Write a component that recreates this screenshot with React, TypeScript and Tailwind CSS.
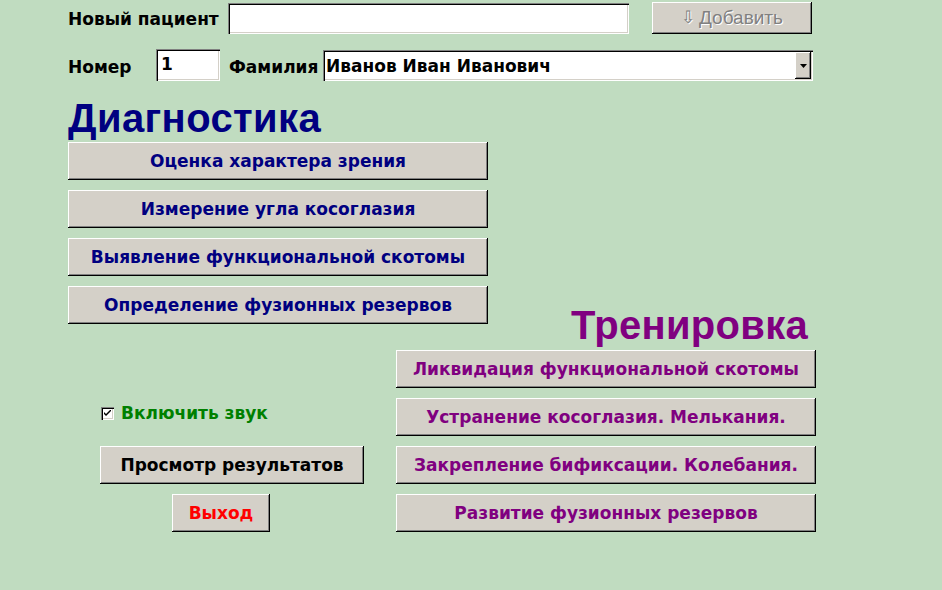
const raised =
  "bg-[#d4d0c8] shadow-[inset_-1px_-1px_0_#000,inset_1px_1px_0_#fff,inset_-2px_-2px_0_#808080]";
const sunken =
  "bg-white shadow-[inset_1px_1px_0_#808080,inset_2px_2px_0_#000,inset_-1px_-1px_0_#fff,inset_-2px_-2px_0_#d4d0c8]";
const uiFont = "font-['DejaVu_Sans',sans-serif] text-[17px] font-bold";

const diagItems = [
  "Оценка характера зрения",
  "Измерение угла косоглазия",
  "Выявление функциональной скотомы",
  "Определение фузионных резервов",
];

const trainItems = [
  "Ликвидация функциональной скотомы",
  "Устранение косоглазия. Мелькания.",
  "Закрепление бификсации. Колебания.",
  "Развитие фузионных резервов",
];

function WinButton({
  label,
  className,
  textClass,
}: {
  label: string;
  className: string;
  textClass: string;
}) {
  return (
    <button
      className={`${raised} ${className} ${uiFont} h-[38px] pt-[2px] flex items-center justify-center ${textClass}`}
    >
      {label}
    </button>
  );
}

export default function App() {
  return (
    <div
      className="w-[942px] h-[590px] bg-[#c0dcc0] pl-[68px] pt-[2px] overflow-hidden text-black"
      style={{ fontFamily: '"Liberation Sans", Arial, sans-serif' }}
    >
      {/* new patient row */}
      <div className="flex items-center h-[32px]">
        <span className={`w-[160px] pt-[3px] ${uiFont}`}>Новый пациент</span>
        <div className={`${sunken} w-[401px] h-[31px] mt-[1px]`} />
        <button
          className={`${raised} ml-[23px] w-[160px] h-[32px] flex items-center justify-center gap-[4px] text-[19px] text-[#808080] [text-shadow:1px_1px_0_#fff]`}
        >
          <span className="text-[17px]">⇩</span>
          <span>Добавить</span>
        </button>
      </div>

      {/* number / surname row */}
      <div className="flex items-center h-[32px] mt-[15px]">
        <span className={`w-[88px] pt-[5px] ${uiFont}`}>Номер</span>
        <div className={`${sunken} w-[64px] h-[32px] pl-[5px] pt-[3px] ${uiFont}`}>1</div>
        <span className={`w-[103px] pl-[9px] pt-[5px] ${uiFont}`}>Фамилия</span>
        <div className={`${sunken} w-[490px] h-[31px] mt-[1px] flex items-center pl-[3px] pr-[2px]`}>
          <span className={`flex-1 pt-[3px] ${uiFont}`}>Иванов Иван Иванович</span>
          <div className={`${raised} w-[16px] h-[27px] flex items-center justify-center`}>
            <svg width="7" height="4" viewBox="0 0 7 4">
              <path d="M0 0h7L3.5 4z" fill="#000" />
            </svg>
          </div>
        </div>
      </div>

      {/* diagnostics */}
      <h1 className="mt-[15px] h-[44px] leading-[44px] text-[40px] font-bold text-[#000080] tracking-[0.4px]">
        Диагностика
      </h1>
      <div className="mt-[2px] w-[420px] flex flex-col gap-[10px]">
        {diagItems.map((item) => (
          <WinButton key={item} label={item} className="w-[420px]" textClass="text-[#000080]" />
        ))}
      </div>

      {/* training heading */}
      <div className="mt-[-21px] w-[740px] h-[44px] leading-[44px] text-right text-[40px] font-bold text-[#800080] tracking-[0.3px]">
        Тренировка
      </div>

      <div className="mt-[3px] flex">
        <div className="w-[328px] flex flex-col">
          <label className="mt-[55px] ml-[33px] h-[16px] flex items-center gap-[7px]">
            <span className={`${sunken} w-[13px] h-[13px] flex items-center justify-center`}>
              <svg width="7" height="7" viewBox="0 0 7 7">
                <path d="M0 2v2l2 2 5-5V-1L2 4z" fill="#000" />
              </svg>
            </span>
            <span className={`${uiFont} pt-[2px] text-[#008000]`}>Включить звук</span>
          </label>
          <WinButton
            label="Просмотр результатов"
            className="mt-[25px] ml-[32px] w-[264px]"
            textClass="text-black"
          />
          <WinButton label="Выход" className="mt-[10px] ml-[104px] w-[98px]" textClass="text-[#ff0000]" />
        </div>
        <div className="w-[420px] flex flex-col gap-[10px]">
          {trainItems.map((item) => (
            <WinButton key={item} label={item} className="w-[420px]" textClass="text-[#800080]" />
          ))}
        </div>
      </div>
    </div>
  );
}
